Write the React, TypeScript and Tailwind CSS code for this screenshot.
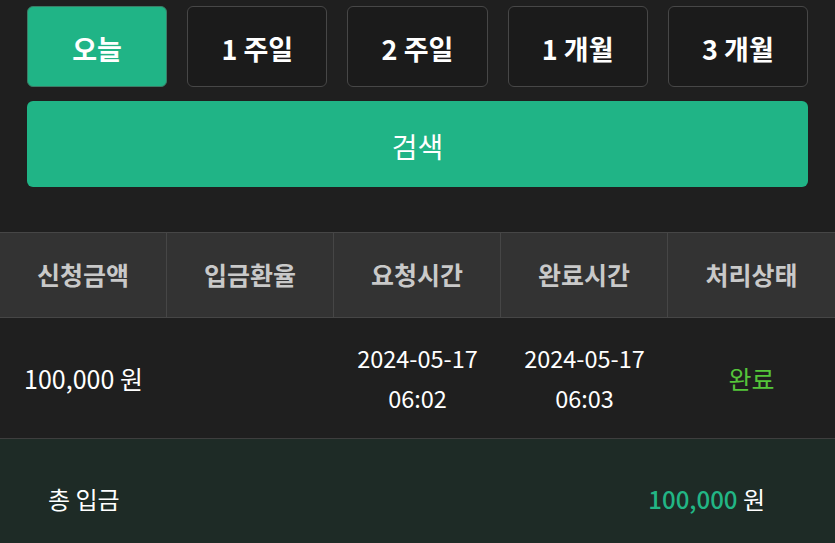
const periods = ['오늘', '1 주일', '2 주일', '1 개월', '3 개월'];

const columns = ['신청금액', '입금환율', '요청시간', '완료시간', '처리상태'];

const App = () => {
  const active = 0;

  return (
    <div
      className="min-h-screen w-[835px] bg-[#1f1f1f] text-white"
      style={{ fontFamily: '"Noto Sans CJK KR", "Noto Sans", sans-serif' }}
    >
      <div className="px-[27px] pt-[6px]">
        <div className="grid grid-cols-5 gap-[20px]">
          {periods.map((label, i) => (
            <button
              key={label}
              className={
                i === active
                  ? 'h-[81px] rounded-[6px] border border-[#3b7d66] bg-[#20b486] pt-[5px] text-[27px] font-bold text-white'
                  : 'h-[81px] rounded-[6px] border border-[#474747] bg-[#1b1b1b] pt-[5px] text-[27px] font-bold text-white'
              }
            >
              {label}
            </button>
          ))}
        </div>
        <button className="mt-[14px] h-[86px] w-full rounded-[6px] bg-[#20b486] pt-[4px] text-[28px] text-white">
          검색
        </button>
      </div>

      <div className="mt-[45px]">
        <div className="grid h-[86px] grid-cols-5 border-y border-[#464646] bg-[#333333]">
          {columns.map((c, i) => (
            <div
              key={c}
              className={
                i < columns.length - 1
                  ? 'flex items-center justify-center border-r border-[#464646] text-[25px] font-bold text-[#c9c9c9]'
                  : 'flex items-center justify-center text-[25px] font-bold text-[#c9c9c9]'
              }
            >
              {c}
            </div>
          ))}
        </div>

        <div className="grid h-[121px] grid-cols-5 border-b border-[#3e3e3e] bg-[#1f1f1f] text-[23.5px] leading-[40px]">
          <div className="flex items-center justify-center text-[25px]">100,000 원</div>
          <div />
          <div className="flex flex-col items-center justify-center">
            <span>2024-05-17</span>
            <span>06:02</span>
          </div>
          <div className="flex flex-col items-center justify-center">
            <span>2024-05-17</span>
            <span>06:03</span>
          </div>
          <div className="flex items-center justify-center text-[25px] text-[#55c53a]">완료</div>
        </div>

        <div className="flex h-[120px] items-center justify-between bg-[#1e2b26] pl-[48px] pr-[70px] text-[24px]">
          <span>총 입금</span>
          <span>
            <span className="font-medium text-[#22b685]">100,000</span> 원
          </span>
        </div>
      </div>
    </div>
  );
};

export default App;
